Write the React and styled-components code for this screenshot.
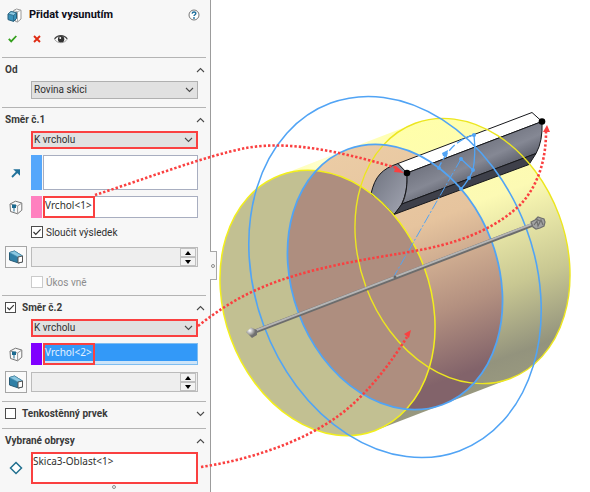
import React from "react";
import styled, { createGlobalStyle } from "styled-components";

const RED = "#fa4040";

const GlobalStyle = createGlobalStyle`
  *, *::before, *::after { box-sizing: border-box; }
  body {
    margin: 0;
    background: #fff;
    color: #303030;
    font-family: Roboto, "Open Sans", sans-serif;
    font-size: 10px;
  }
  button, input, select { font: inherit; color: inherit; }
`;

const Page = styled.div`
  display: flex;
  min-height: 100vh;
  overflow: hidden;
`;

const Panel = styled.form`
  position: relative;
  flex: 0 0 211px;
  padding: 5px 4px 0 2px;
  background: #f7f7f7;
  border-right: 1px solid #9c9c9c;
`;

const TitleBar = styled.header`
  display: flex;
  align-items: center;
  height: 20px;
  padding: 0 4px 0 5px;
`;

const Title = styled.h1`
  flex: 1;
  margin: 0 0 0 6px;
  font-size: 11px;
  line-height: 20px;
  font-weight: 700;
  color: #0c0c18;
  white-space: nowrap;
`;

const Toolbar = styled.div`
  display: flex;
  gap: 7px;
  height: 32px;
  padding-top: 6px;
`;

const IconButton = styled.button`
  display: grid;
  place-items: center;
  width: ${(p) => p.$width || 16}px;
  height: 16px;
  padding: 0;
  border: 0;
  background: none;
`;

const Section = styled.section`
  border-top: 1px solid #b4b4b4;
  padding-bottom: ${(p) => p.$end}px;
`;

const SectionHeader = styled.div`
  display: flex;
  align-items: center;
  height: 23px;
  padding-left: 3px;
`;

const SectionTitle = styled.h2`
  flex: 1;
  display: flex;
  align-items: center;
  gap: 6px;
  margin: 0;
  font-size: 10px;
  line-height: 16px;
  font-weight: 700;
  color: #3a3a3a;
`;

const Rows = styled.div`
  display: grid;
  gap: 6px;
`;

const Row = styled.div`
  display: grid;
  grid-template-columns: 22px minmax(0, 1fr);
  column-gap: 4px;
  align-items: center;
  padding: 0 8px 0 3px;
`;

const Content = styled.div`
  grid-column: 2;
  min-width: 0;
`;

const SelectBox = styled.div`
  display: grid;
  align-items: center;
  height: 18px;
  background: #e1e1e1;
  border: ${(p) => (p.$marked ? `2px solid ${RED}` : "1px solid #b0b0b0")};

  select, svg { grid-area: 1 / 1; }
  select {
    width: 100%;
    height: 14px;
    padding: 0 ${(p) => (p.$marked ? 1 : 2)}px;
    border: 0;
    background: none;
    appearance: none;
    line-height: 14px;
  }
  svg { justify-self: end; margin-right: 3px; pointer-events: none; }
`;

const PickBox = styled.div`
  display: flex;
  height: ${(p) => p.$height}px;
`;

const Swatch = styled.span`
  flex: 0 0 11px;
  background: ${(p) => p.$color};
`;

const List = styled.ul`
  flex: 1;
  display: flex;
  align-items: flex-start;
  height: 100%;
  margin: 0 0 0 1px;
  padding: 0;
  list-style: none;
  font-family: "Noto Sans", sans-serif;
  border: 1px solid ${(p) => (p.$selected ? "#7fbdf0" : "#a8aec0")};
  background: ${(p) =>
    p.$selected
      ? "linear-gradient(#3399f8 0 17px, #cde4f8 17px)"
      : "#fff"};
  color: ${(p) => (p.$selected ? "#e4f1ff" : "inherit")};
`;

const ListItem = styled.li`
  flex: 0 0 52px;
  height: 22px;
  margin: -1px;
  border: 2px solid ${RED};
  line-height: 14px;
  white-space: nowrap;
`;

const Contours = styled(List)`
  height: 32px;
  margin: 0;
  border: 2px solid ${RED};
  line-height: 15px;
`;

const CheckLabel = styled.label`
  display: flex;
  align-items: center;
  gap: 3px;
  height: 16px;
  color: ${(p) => (p.$disabled ? "#8c8c8c" : "inherit")};
`;

const CheckFrame = styled.span`
  display: grid;
  width: ${(p) => p.$size}px;
  height: ${(p) => p.$size}px;

  input, svg { grid-area: 1 / 1; width: 100%; height: 100%; margin: 0; }
  input {
    appearance: none;
    background: #fff;
    border: 1px solid #4c4c4c;
  }
  input:disabled { border-color: #cbcbcb; }
  svg { pointer-events: none; }
`;

const DraftButton = styled.button`
  display: grid;
  place-items: center;
  width: 22px;
  height: 22px;
  padding: 0;
  background: #fafafa;
  border: 1px solid #a6a6a6;
`;

const Spinner = styled.div`
  display: flex;
  height: 20px;
  background: #eee;
  border: 1px solid #bbb;

  input {
    flex: 1;
    min-width: 0;
    padding: 0 3px;
    border: 0;
    background: none;
  }
`;

const Steps = styled.div`
  display: grid;
  grid-template-rows: 1fr 1fr;
  width: 16px;
  margin-right: 1px;

  button {
    display: grid;
    place-items: center;
    padding: 0;
    border: 1px solid #c0c0c0;
    background: #f3f3f3;
  }
`;

const Grip = styled.span`
  display: block;
  width: 4px;
  height: 4px;
  border: 1px solid #8c8c8c;
  border-radius: 50%;
`;

const BottomGrip = styled.div`
  display: flex;
  justify-content: center;
  padding: 1px 0 0 20px;
`;

const Handle = styled.button`
  position: absolute;
  z-index: 1;
  top: 251px;
  right: -7px;
  display: grid;
  place-items: center;
  width: 7px;
  height: 29px;
  padding: 0;
  border: 1px solid #a8a8a8;
  border-left: 0;
  background: #f7f7f7;
`;

const Viewport = styled.main`
  flex: 1;
  min-width: 0;
`;

const Drawing = styled.svg`
  position: relative;
  display: block;
  overflow: visible;
  pointer-events: none;
  z-index: 2;
`;

const Chevron = ({ down }) => (
  <svg width="9" height="6" viewBox="0 0 9 6" fill="none" stroke="#4a4a4a" strokeWidth="1.1">
    <path d={down ? "M1 1l3.5 3.5L8 1" : "M1 5l3.5-3.5L8 5"} />
  </svg>
);

const Check = ({ label, size = 12, checked, disabled, bare }) => (
  <CheckLabel $disabled={disabled}>
    <CheckFrame $size={size}>
      <input type="checkbox" defaultChecked={checked} disabled={disabled} aria-label={bare ? label : undefined} />
      {checked && (
        <svg viewBox="0 0 12 12" fill="none" stroke="#333" strokeWidth="1.2">
          <path d="M2.5 6l2.3 2.4L9.6 3.3" />
        </svg>
      )}
    </CheckFrame>
    {!bare && label}
  </CheckLabel>
);

const Header = ({ title, toggle, checked, collapsed }) => (
  <SectionHeader>
    <SectionTitle>
      {toggle && <Check bare label={title} size={11} checked={checked} />}
      {title}
    </SectionTitle>
    <IconButton type="button" $width={12} aria-label={title} aria-expanded={!collapsed}>
      <Chevron down={collapsed} />
    </IconButton>
  </SectionHeader>
);

const Choice = ({ label, value, marked }) => (
  <Row>
    <Content>
      <SelectBox $marked={marked}>
        <select aria-label={label} defaultValue={value}>
          <option>{value}</option>
        </select>
        <Chevron down />
      </SelectBox>
    </Content>
  </Row>
);

const VertexIcon = () => (
  <svg width="14" height="15" viewBox="0 0 14 15" fill="none" stroke="#757575" strokeLinejoin="round">
    <path d="M1 4L6.500 1.200 12.800 3v7.200L8.600 13.800 1.500 11.500z" fill="#fafafa" />
    <path d="M1 4l7.600 2L12.800 3M8.600 6v7.800" stroke="#999" />
    <path d="M3 4.500h4v3.500h-4z" fill="#1c6b91" stroke="none" />
    <path d="M5 7v4.500" stroke="#1c6b91" />
  </svg>
);

const DraftIcon = () => (
  <svg width="16" height="14" viewBox="0 0 16 14" strokeLinejoin="round">
    <path d="M1.500 2.500l5-1.500 8 5v6l-4 1-9-3z" fill="#2f7fa6" stroke="#285b75" />
    <path d="M1.500 2.500l5-1.500 8 5-4.500 1z" fill="#8bc8e2" stroke="#4e94b3" strokeWidth=".6" />
    <path d="M10 7l4.500-1v6l-4.500 1z" fill="#fff" stroke="#555" />
  </svg>
);

const DraftRow = ({ label }) => (
  <Row>
    <DraftButton type="button" aria-label={label}>
      <DraftIcon />
    </DraftButton>
    <Content>
      <Spinner>
        <input type="text" aria-label={label} disabled />
        <Steps>
          <button type="button" aria-label="+">
            <svg width="6" height="4" viewBox="0 0 6 4"><path d="M0 4l3-4 3 4z" /></svg>
          </button>
          <button type="button" aria-label="-">
            <svg width="6" height="4" viewBox="0 0 6 4"><path d="M0 0l3 4 3-4z" /></svg>
          </button>
        </Steps>
      </Spinner>
    </Content>
  </Row>
);

const Pick = ({ icon, color, height = 22, value, selected, label }) => (
  <Row>
    <IconButton as="span" $width={22}>{icon}</IconButton>
    <Content>
      <PickBox $height={height}>
        <Swatch $color={color} />
        <List role="listbox" aria-label={label} $selected={selected}>
          {value && <ListItem role="option" aria-selected={!!selected}>{value}</ListItem>}
        </List>
      </PickBox>
    </Content>
  </Row>
);

const ArrowIcon = () => (
  <svg width="10" height="10" viewBox="0 0 10 10">
    <path d="M1 9l6-6" stroke="#20719a" strokeWidth="1.8" />
    <path d="M2.2 1.2H9v6.5z" fill="#20719a" />
  </svg>
);

const FeatureIcon = () => (
  <svg width="16" height="15" viewBox="0 0 16 15" strokeLinejoin="round">
    <path d="M6.500 3.500V2.500L9.500 1 14 2.200V11l-3.500 3-2-.6z" fill="#fff" stroke="#999" />
    <path d="M6.500 2.500l4 1.200V14M10.500 3.700L14 2.200" fill="none" stroke="#aaa" />
    <path d="M1 6l3-2.400 5.500 1.200v5.800L6.600 13.400 1 11.600z" fill="#3b92ba" stroke="#245d7a" />
    <path d="M1 6l3-2.400 5.500 1.200L6.600 7.400z" fill="#8cc9e3" stroke="#245d7a" strokeWidth=".7" />
    <path d="M6.600 7.400v6" stroke="#245d7a" strokeWidth=".7" />
  </svg>
);

const HelpIcon = () => (
  <svg width="12" height="12" viewBox="0 0 12 12" fill="none">
    <circle cx="6" cy="6" r="5" fill="#fff" stroke="#777" />
    <path d="M4.2 4.6c.1-2.3 3.8-2.1 3.6 0C7.7 5.8 6 5.7 6 7.1" stroke="#1e6f9c" strokeWidth="1.4" />
    <circle cx="6" cy="9" r=".9" fill="#1e6f9c" />
  </svg>
);

const EyeIcon = () => (
  <svg width="14" height="11" viewBox="0 0 15 11">
    <path d="M.8 5.6C3.5.8 11 .4 14 5.3 11.5 9.7 4.2 10.4.8 5.6z" fill="#fff" stroke="#999" />
    <path d="M.6 4.8C3.5.3 11 0 14.2 4.8" fill="none" stroke="#444" strokeWidth="1.2" />
    <circle cx="7.6" cy="5.1" r="3.4" fill="#333" />
    <circle cx="6.7" cy="3.9" r="1" fill="#fff" />
  </svg>
);

const CAP = { rx: 136.2, ry: 103 };
const FRONT = "translate(327.5 303) rotate(69.7)";
const MIDDLE = "translate(395 277) rotate(69.7)";
const BACK = "translate(462.5 251) rotate(69.7)";

const Scene = () => (
  <Drawing width="379" height="492" viewBox="211 0 379 492" role="img" aria-label="Model">
    <defs>
      <linearGradient id="body" gradientUnits="userSpaceOnUse" x1="415" y1="123" x2="510" y2="379">
        <stop offset="0" stopColor="#ffffaa" />
        <stop offset="0.35" stopColor="#fcfab4" />
        <stop offset="0.68" stopColor="#c8c792" />
        <stop offset="0.92" stopColor="#93937d" />
        <stop offset="1" stopColor="#98987f" />
      </linearGradient>
      <linearGradient id="shine" gradientUnits="userSpaceOnUse" x1="280" y1="175" x2="400" y2="129">
        <stop offset="0" stopColor="#fff" stopOpacity="0" />
        <stop offset="0.4" stopColor="#fff" stopOpacity="0.5" />
        <stop offset="1" stopColor="#fff" stopOpacity="0" />
      </linearGradient>
      <linearGradient id="core" gradientUnits="userSpaceOnUse" x1="348" y1="149" x2="442" y2="405">
        <stop offset="0" stopColor="#ebcca5" />
        <stop offset="0.35" stopColor="#e6c49e" />
        <stop offset="0.68" stopColor="#b39080" />
        <stop offset="0.92" stopColor="#82636a" />
        <stop offset="1" stopColor="#82636a" />
      </linearGradient>
      <linearGradient id="steel" gradientUnits="userSpaceOnUse" x1="465" y1="145" x2="482" y2="183">
        <stop offset="0" stopColor="#70737f" />
        <stop offset="0.5" stopColor="#858894" />
        <stop offset="1" stopColor="#555864" />
      </linearGradient>
      <linearGradient id="cap" x1="0" y1="0" x2="1" y2="1">
        <stop offset="0" stopColor="#6c707c" />
        <stop offset="1" stopColor="#a3a6b3" />
      </linearGradient>
      <radialGradient id="ball" cx="0.35" cy="0.3">
        <stop offset="0" stopColor="#fff" />
        <stop offset="1" stopColor="#707070" />
      </radialGradient>
      <clipPath id="middleClip">
        <ellipse {...CAP} transform={MIDDLE} />
      </clipPath>
      <clipPath id="backClip">
        <ellipse {...CAP} transform={BACK} />
      </clipPath>
    </defs>

    <path d="M280.3 175.3L415.3 123.3 509.7 378.7 374.7 430.7z" fill="url(#body)" />
    <path d="M280.3 175.3L415.3 123.3 440 190 305 240z" fill="url(#shine)" />
    <rect x="340" y="110" width="240" height="280" fill="url(#body)" clipPath="url(#backClip)" />
    <rect x="280" y="130" width="230" height="290" fill="url(#core)" clipPath="url(#middleClip)" />
    <ellipse {...CAP} transform={FRONT} fill="#c2c092" />
    <g clipPath="url(#middleClip)">
      <ellipse {...CAP} transform={FRONT} fill="#ae8e7f" />
    </g>

    <g stroke="#17181c" strokeLinejoin="round">
      <path d="M371 194C375 176 382 169 398 163.500L407 173C408 195 401 208 394 214.500 387 207 380 200 371 194z" fill="url(#cap)" />
      <path d="M398 163.500L532 112.500 542 121.500 407 173z" fill="#fff" />
      <path d="M407 173L542 121.500Q543 141 536 153.500L402 204Q408 192 407 173z" fill="url(#steel)" />
      <path d="M402 204L536 153.500 529 164.500 394 214.500z" fill="#3e404a" />
    </g>

    <g fill="none">
      <ellipse {...CAP} transform={FRONT} stroke="#f2ef1c" strokeWidth="1.5" />
      <ellipse {...CAP} transform={BACK} stroke="#ece620" strokeWidth="1.4" />
      <ellipse {...CAP} transform={MIDDLE} stroke="#51a4f5" strokeWidth="1.8" />
      <ellipse rx="185.4" ry="140" transform={MIDDLE} stroke="#51a4f5" strokeWidth="1.6" />
    </g>

    <g fill="none" stroke="#51a4f5" strokeWidth="1.300">
      <path d="M474 135Q476 154 473 170Q469 180 461 189M461 159L473 170" />
      <path d="M474 135Q452 140 439 167" strokeDasharray="8 3" />
      <path d="M461 159L393 278" strokeWidth="1" strokeDasharray="10 2 2 2" />
    </g>
    <g fill="#51a4f5">
      <circle cx="474" cy="135" r="2" /><circle cx="461" cy="159" r="2" />
      <circle cx="439" cy="168" r="2" /><circle cx="473" cy="170" r="2" />
      <circle cx="469" cy="178" r="2" /><circle cx="461" cy="189" r="2" />
      <path d="M442 153l6-3-1 7-4-1z" />
    </g>

    <path d="M254 332L532 225" stroke="#6c6c6c" strokeWidth="4" />
    <path d="M254 331L532 224" stroke="#b5b5b5" strokeWidth="2" />
    <path d="M246 332l5-4.500 6 2.500v5l-5 3z" fill="url(#ball)" />
    <circle cx="395" cy="277" r="1.500" fill="#666" />
    <g fill="#a2a2a2" stroke="#6f6f6f" strokeWidth="1.200">
      <path d="M531 222l4-2 3-3 3 1 3 1 1 3-1 4-4 2-4 1-3-2z" />
      <path d="M534 225l3-4 1 5 3-6 2 5M536 219l4 2" fill="none" />
    </g>
    <g fill="#000">
      <circle cx="407" cy="173" r="3.300" />
      <circle cx="542" cy="121.500" r="3.300" />
    </g>

    <g fill="none" stroke={RED} strokeWidth="2.600" strokeDasharray="2.400 2">
      <path d="M95 195C145 179 205 156 246 148C295 139 355 156 397 168" />
      <path d="M198 326C235 297 265 283 315 270C360 259 395 255 425 249C470 240 500 224 520 205C538 186 546 160 546 132" />
      <path d="M201 467C260 458 318 436 353 404C376 383 393 359 407 337" />
    </g>
    <g fill={RED}>
      <path d="M404 173l-8-7-2 6z" />
      <path d="M547 125l-4 7 7 0z" />
      <path d="M411 330l-7 4 5 4z" />
    </g>
  </Drawing>
);

export default function App() {
  return (
    <Page>
      <GlobalStyle />
      <Panel>
        <TitleBar>
          <FeatureIcon />
          <Title>Přidat vysunutím</Title>
          <IconButton type="button" aria-label="?"><HelpIcon /></IconButton>
        </TitleBar>
        <Toolbar>
          <IconButton type="button" $width={20} aria-label="OK">
            <svg width="9" height="8" viewBox="0 0 9 8" fill="none" stroke="#35a01e" strokeWidth="1.8">
              <path d="M.8 3.800l2.400 2.600L8.300 1" />
            </svg>
          </IconButton>
          <IconButton type="button" $width={16} aria-label="Storno">
            <svg width="8" height="8" viewBox="0 0 8 8" stroke="#df2b12" strokeWidth="1.900">
              <path d="M1 1l6 6M7 1L1 7" />
            </svg>
          </IconButton>
          <IconButton type="button" $width={18} aria-label="Náhled"><EyeIcon /></IconButton>
        </Toolbar>

        <Section $end={8}>
          <Header title="Od" />
          <Choice label="Od" value="Rovina skici" />
        </Section>

        <Section $end={5}>
          <Header title="Směr č.1" />
          <Rows>
            <Choice label="Směr č.1" value="K vrcholu" marked />
            <Pick label="Směr" icon={<ArrowIcon />} color="#55a7fb" height={35} />
            <Pick label="Vrchol" icon={<VertexIcon />} color="#ff80bf" value="Vrchol<1>" />
            <Row><Content><Check label="Sloučit výsledek" checked /></Content></Row>
            <DraftRow label="Úkos 1" />
            <Row><Content><Check label="Úkos vně" disabled /></Content></Row>
          </Rows>
        </Section>

        <Section $end={8}>
          <Header title="Směr č.2" toggle checked />
          <Rows>
            <Choice label="Směr č.2" value="K vrcholu" marked />
            <Pick label="Vrchol 2" icon={<VertexIcon />} color="#8000ff" value="Vrchol<2>" selected />
            <DraftRow label="Úkos 2" />
          </Rows>
        </Section>

        <Section $end={3}>
          <Header title="Tenkostěnný prvek" toggle collapsed />
        </Section>

        <Section $end={0}>
          <Header title="Vybrané obrysy" />
          <Row>
            <IconButton as="span" $width={22}>
              <svg width="14" height="14" viewBox="0 0 14 14" fill="#fff" stroke="#22708f" strokeWidth="1.500">
                <path d="M7 1.500L12.500 7 7 12.500 1.500 7z" />
              </svg>
            </IconButton>
            <Content>
              <Contours role="listbox" aria-label="Vybrané obrysy">
                <li role="option" aria-selected="false">Skica3-Oblast&lt;1&gt;</li>
              </Contours>
            </Content>
          </Row>
          <BottomGrip><Grip /></BottomGrip>
        </Section>
        <Handle type="button" aria-label="Panel"><Grip /></Handle>
      </Panel>
      <Viewport>
        <Scene />
      </Viewport>
    </Page>
  );
}
